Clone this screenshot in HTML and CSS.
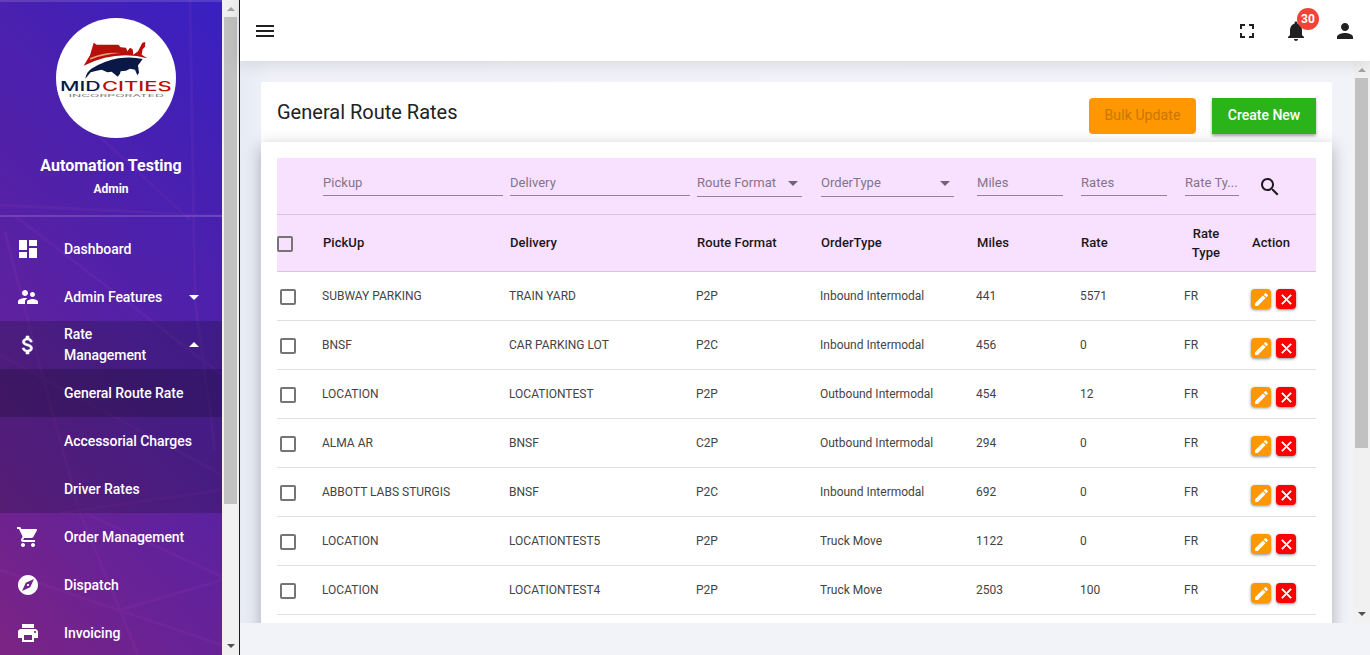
FILE: index.html
```
<!DOCTYPE html>
<html lang="en">
<head>
<meta charset="utf-8">
<title>General Route Rates</title>
<link rel="stylesheet" href="styles.css">
</head>
<body>
<svg class="defs" width="0" height="0">
  <symbol id="edit" viewBox="0 0 24 24"><path d="M3 17.25V21h3.75L17.81 9.94l-3.75-3.75L3 17.25zM20.71 7.04a1 1 0 0 0 0-1.41l-2.34-2.34a1 1 0 0 0-1.41 0l-1.83 1.83 3.75 3.75 1.83-1.83z"/></symbol>
  <symbol id="close" viewBox="0 0 24 24"><path d="M19 6.41 17.59 5 12 10.59 6.41 5 5 6.41 10.59 12 5 17.59 6.41 19 12 13.41 17.59 19 19 17.59 13.41 12z"/></symbol>
</svg>
<div class="app">
  <aside class="sidebar">
    <div class="side-main">
      <svg class="beams" viewBox="0 0 222 655" preserveAspectRatio="none">
        <path d="M0 205 222 216M5 232 45 385 80 513 120 610 138 655M15 216 222 375M0 355 222 475M0 570 222 645M120 610 222 580M60 513 222 490M85 513 222 577M190 0 195 300 215 450M60 100 190 220"/>
      </svg>
      <div class="profile">
        <div class="logo">
          <svg viewBox="18 18 360 360" width="120" height="120">
            <path fill="#b80f0a" d="M101 161 120 130 131 92 140 98 205 98 212 106 228 107 232 118 240 107 248 112 250 128 264 118 277 92 286 90 285 104 278 112 275 128 292 139Q200 113 101 161z"/>
            <path fill="#e5a080" d="M120 138Q165 119 212 123 165 126 120 143z"/>
            <path fill="#0a1845" d="M106 200Q109 180 124 170 165 146 205 139 245 133 278 141L270 152 264 160 267 182 262 190 255 173 240 170 228 176 212 178 210 185 203 194 196 188 185 179 172 181 155 173 140 176 122 181z"/>
            <text class="logo-name navy" x="30" y="237" textLength="122" lengthAdjust="spacingAndGlyphs">MID</text>
            <text class="logo-name red" x="156" y="237" textLength="209" lengthAdjust="spacingAndGlyphs">CITIES</text>
            <text class="logo-sub" x="56" y="255" textLength="286" lengthAdjust="spacingAndGlyphs">INCORPORATED</text>
          </svg>
        </div>
        <div class="user">Automation Testing</div>
        <div class="role">Admin</div>
      </div>
      <nav class="menu">
        <a class="item"><svg viewBox="0 0 24 24"><path d="M3 13h8V3H3v10zm0 8h8v-6H3v6zm10 0h8V11h-8v10zm0-18v6h8V3h-8z"/></svg><span>Dashboard</span></a>
        <a class="item"><svg viewBox="0 0 24 24"><path d="M16.5 12c1.38 0 2.49-1.12 2.49-2.5S17.88 7 16.5 7 14 8.12 14 9.5s1.12 2.5 2.5 2.5zM9 11c1.66 0 2.99-1.34 2.99-3S10.66 5 9 5 6 6.34 6 8s1.34 3 3 3zm7.500 3c-1.830 0-5.500.920-5.500 2.750V19h11v-2.250c0-1.830-3.670-2.750-5.500-2.750zM9 13c-2.330 0-7 1.170-7 3.500V19h7v-2.250c0-.850.330-2.340 2.370-3.470C10.500 13.100 9.660 13 9 13z"/></svg><span>Admin Features</span><i class="caret down"></i></a>
        <div class="group">
          <a class="item"><svg class="bold" viewBox="0 0 24 24"><path d="M11.800 10.900c-2.270-.590-3-1.200-3-2.150 0-1.090 1.010-1.850 2.700-1.850 1.780 0 2.440.850 2.500 2.100h2.210c-.070-1.720-1.120-3.300-3.210-3.810V3h-3v2.160c-1.940.420-3.500 1.680-3.500 3.610 0 2.310 1.910 3.460 4.700 4.130 2.500.600 3 1.480 3 2.410 0 .690-.490 1.790-2.700 1.790-2.060 0-2.870-.920-2.980-2.100h-2.200c.120 2.190 1.760 3.420 3.680 3.830V21h3v-2.150c1.950-.370 3.500-1.500 3.500-3.550 0-2.840-2.430-3.810-4.700-4.400z"/></svg><span>Rate Management</span><i class="caret up"></i></a>
          <a class="item sub active"><span>General Route Rate</span></a>
          <a class="item sub"><span>Accessorial Charges</span></a>
          <a class="item sub"><span>Driver Rates</span></a>
        </div>
        <a class="item"><svg viewBox="0 0 24 24"><path d="M7 18c-1.100 0-1.990.900-1.990 2S5.900 22 7 22s2-.900 2-2-.900-2-2-2zM1 2v2h2l3.600 7.590-1.350 2.450c-.160.280-.250.610-.250.960 0 1.100.900 2 2 2h12v-2H7.420c-.140 0-.250-.110-.250-.250l.030-.120.900-1.630h7.450c.750 0 1.410-.410 1.750-1.030l3.580-6.490c.080-.140.120-.310.120-.480 0-.550-.450-1-1-1H5.210l-.940-2H1zm16 16c-1.100 0-1.990.900-1.990 2s.890 2 1.990 2 2-.900 2-2-.900-2-2-2z"/></svg><span>Order Management</span></a>
        <a class="item"><svg viewBox="0 0 24 24"><path d="M12 10.900c-.610 0-1.100.490-1.100 1.100s.490 1.100 1.100 1.100c.610 0 1.100-.490 1.100-1.100s-.490-1.100-1.100-1.100zM12 2C6.480 2 2 6.480 2 12s4.480 10 10 10 10-4.480 10-10S17.520 2 12 2zm2.190 12.190L6 18l3.810-8.190L18 6l-3.810 8.190z"/></svg><span>Dispatch</span></a>
        <a class="item"><svg viewBox="0 0 24 24"><path d="M19 8H5c-1.660 0-3 1.340-3 3v6h4v4h12v-4h4v-6c0-1.660-1.340-3-3-3zm-3 11H8v-5h8v5zm3-7c-.550 0-1-.450-1-1s.450-1 1-1 1 .450 1 1-.450 1-1 1zm-1-9H6v4h12V3z"/></svg><span>Invoicing</span></a>
      </nav>
    </div>
    <div class="scrollbar"><i class="arrow up"></i><div class="thumb side-thumb"></div><i class="arrow down"></i></div>
  </aside>
  <div class="page">
    <header class="topbar">
      <svg class="burger" viewBox="0 0 24 24"><path d="M3 18h18v-2H3v2zm0-5h18v-2H3v2zm0-7v2h18V6H3z"/></svg>
      <div class="tools">
        <svg viewBox="0 0 24 24"><path d="M7 14H5v5h5v-2H7v-3zm-2-4h2V7h3V5H5v5zm12 7h-3v2h5v-5h-2v3zM14 5v2h3v3h2V5h-5z"/></svg>
        <div class="bell">
          <svg viewBox="0 0 24 24"><path d="M12 22c1.100 0 2-.900 2-2h-4c0 1.100.890 2 2 2zm6-6v-5c0-3.070-1.640-5.640-4.500-6.320V4c0-.830-.670-1.500-1.500-1.500s-1.500.670-1.500 1.500v.680C7.630 5.360 6 7.920 6 11v5l-2 2v1h16v-1l-2-2z"/></svg>
          <span class="badge">30</span>
        </div>
        <svg viewBox="0 0 24 24"><path d="M12 12c2.210 0 4-1.790 4-4s-1.790-4-4-4-4 1.790-4 4 1.790 4 4 4zm0 2c-2.670 0-8 1.340-8 4v2h16v-2c0-2.660-5.330-4-8-4z"/></svg>
      </div>
    </header>
    <div class="scroller">
      <main class="content">
        <section class="card-head">
          <h1>General Route Rates</h1>
          <div class="btn bulk">Bulk Update</div>
          <div class="btn create">Create New</div>
        </section>
        <section class="card-body">
          <div class="table">
            <div class="row filters">
              <span></span>
              <div class="field">Pickup</div>
              <div class="field">Delivery</div>
              <div class="field select route">Route Format<i class="caret down"></i></div>
              <div class="field select order">OrderType<i class="caret down"></i></div>
              <div class="field short">Miles</div>
              <div class="field short">Rates</div>
              <div class="field tiny">Rate Ty...</div>
              <svg class="search" viewBox="0 0 24 24"><path d="M15.500 14h-.790l-.280-.270C15.410 12.590 16 11.110 16 9.500 16 5.910 13.090 3 9.500 3S3 5.910 3 9.500 5.910 16 9.500 16c1.610 0 3.090-.590 4.230-1.570l.270.280v.790l5 4.990L20.490 19l-4.990-5zm-6 0C7.010 14 5 11.990 5 9.500S7.010 5 9.500 5 14 7.010 14 9.500 11.990 14 9.500 14z"/></svg>
            </div>
            <div class="row heads">
              <i class="check"></i><b>PickUp</b><b>Delivery</b><b>Route Format</b><b>OrderType</b><b>Miles</b><b>Rate</b><b class="two-line">Rate Type</b><b>Action</b>
            </div>
            <div class="row"><i class="check"></i><span>SUBWAY PARKING</span><span>TRAIN YARD</span><span>P2P</span><span>Inbound Intermodal</span><span>441</span><span>5571</span><span>FR</span><div class="actions"><a class="edit"><svg><use href="#edit"/></svg></a><a class="del"><svg><use href="#close"/></svg></a></div></div>
            <div class="row"><i class="check"></i><span>BNSF</span><span>CAR PARKING LOT</span><span>P2C</span><span>Inbound Intermodal</span><span>456</span><span>0</span><span>FR</span><div class="actions"><a class="edit"><svg><use href="#edit"/></svg></a><a class="del"><svg><use href="#close"/></svg></a></div></div>
            <div class="row"><i class="check"></i><span>LOCATION</span><span>LOCATIONTEST</span><span>P2P</span><span>Outbound Intermodal</span><span>454</span><span>12</span><span>FR</span><div class="actions"><a class="edit"><svg><use href="#edit"/></svg></a><a class="del"><svg><use href="#close"/></svg></a></div></div>
            <div class="row"><i class="check"></i><span>ALMA AR</span><span>BNSF</span><span>C2P</span><span>Outbound Intermodal</span><span>294</span><span>0</span><span>FR</span><div class="actions"><a class="edit"><svg><use href="#edit"/></svg></a><a class="del"><svg><use href="#close"/></svg></a></div></div>
            <div class="row"><i class="check"></i><span>ABBOTT LABS STURGIS</span><span>BNSF</span><span>P2C</span><span>Inbound Intermodal</span><span>692</span><span>0</span><span>FR</span><div class="actions"><a class="edit"><svg><use href="#edit"/></svg></a><a class="del"><svg><use href="#close"/></svg></a></div></div>
            <div class="row"><i class="check"></i><span>LOCATION</span><span>LOCATIONTEST5</span><span>P2P</span><span>Truck Move</span><span>1122</span><span>0</span><span>FR</span><div class="actions"><a class="edit"><svg><use href="#edit"/></svg></a><a class="del"><svg><use href="#close"/></svg></a></div></div>
            <div class="row"><i class="check"></i><span>LOCATION</span><span>LOCATIONTEST4</span><span>P2P</span><span>Truck Move</span><span>2503</span><span>100</span><span>FR</span><div class="actions"><a class="edit"><svg><use href="#edit"/></svg></a><a class="del"><svg><use href="#close"/></svg></a></div></div>
          </div>
        </section>
      </main>
      <div class="scrollbar"><i class="arrow up"></i><div class="thumb page-thumb"></div><i class="arrow down"></i></div>
    </div>
  </div>
</div>
</body>
</html>
```

FILE: styles.css
```
* { box-sizing: border-box; }
body { margin: 0; font-family: Roboto, "Liberation Sans", sans-serif; color: #212121; background: #f2f3f8; }
.defs { position: absolute; }
.app { display: flex; width: 1370px; height: 655px; overflow: hidden; }

/* Sidebar */
.sidebar { display: flex; flex: none; width: 240px; border-right: 1px solid #1c1a20; }
.side-main { position: relative; flex: none; width: 222px; overflow: hidden; color: #fff;
  background: linear-gradient(48deg, #7c2484 0%, #672296 25%, #5521a6 52%, #4720b1 76%, #3920c3 100%); }
.beams { position: absolute; inset: 0; width: 222px; height: 655px; fill: none; stroke: #c050c8; stroke-opacity: .09; stroke-width: 3; }
.profile { position: relative; height: 217px; padding-top: 16px; border-top: 2px solid rgba(255,255,255,.13); border-bottom: 2px solid rgba(255,255,255,.15); text-align: center; }
.logo { width: 120px; height: 120px; margin-left: 56px; border-radius: 50%; background: #fff; overflow: hidden; }
.logo svg { display: block; }
.logo-name { font: 500 40px Inter, sans-serif; }
.navy { fill: #0a1845; }
.red { fill: #b80f0a; }
.logo-sub { font: 12px Inter, sans-serif; fill: #777; }
.user { margin-top: 18px; font-size: 16px; line-height: 20px; font-weight: 700; }
.role { margin-top: 6px; font-size: 12px; line-height: 14px; font-weight: 700; }
.menu { position: relative; padding-top: 8px; }
.item { display: flex; align-items: center; height: 48px; padding: 0 16px; font-size: 14px; font-weight: 500; line-height: 21px; letter-spacing: -.05px; }
.item svg { flex: none; width: 24px; height: 24px; margin-right: 24px; fill: #fff; }
.item .bold { stroke: #fff; stroke-width: .6px; }
.item span { flex: 1; }
.item .caret { margin-right: 7px; }
.item .caret.up { margin-bottom: 2px; }
.group { background: rgba(20,15,40,.26); }
.group .item:first-child span { padding-right: 30px; }
.sub { padding-left: 64px; padding-right: 0; }
.active { background: rgba(20,10,40,.28); }
.caret { flex: none; width: 0; height: 0; border: 5px solid transparent; }
.caret.down { border-top-color: currentColor; border-bottom: 0; }
.caret.up { border-bottom-color: currentColor; border-top: 0; }

/* Scrollbars */
.scrollbar { display: flex; flex-direction: column; align-items: center; flex: none; width: 17px; background: #f1f1f1; }
.arrow { width: 0; height: 0; border: 4px solid transparent; }
.arrow.up { margin: 7px 0 6px; border-top: 0; border-bottom-color: #a3a3a3; }
.arrow.down { margin: auto 0 7px; border-bottom: 0; border-top-color: #505050; }
.thumb { width: 13px; background: #c1c1c1; }
.side-thumb { height: 487px; }
.page-thumb { height: 370px; }

/* Top bar */
.page { flex: 1; display: flex; flex-direction: column; }
.topbar { position: relative; z-index: 2; display: flex; align-items: center; justify-content: space-between; flex: none; height: 61px; padding: 0 13px; background: #fff; box-shadow: 0 2px 16px rgba(69,65,78,.16); }
.topbar svg { display: block; width: 24px; height: 24px; fill: #212121; }
.tools { display: flex; gap: 25px; }
.bell { position: relative; }
.badge { position: absolute; left: 13px; top: -11px; width: 22px; height: 22px; border-radius: 50%; background: #f44336; color: #fff; font-size: 12px; line-height: 22px; font-weight: 700; text-align: center; }

/* Content */
.scroller { display: flex; flex: none; height: 562px; overflow: hidden; }
.content { flex: 1; min-width: 0; padding: 21px 21px 0; background: linear-gradient(90deg, #e7ebf4, #f0f2f8 3%, #f2f3f8); overflow: hidden; }
.card-head { display: flex; height: 60px; padding: 16px 16px 0; border-radius: 2px 2px 0 0; background: #fff; }
h1 { flex: 1; margin: 0; font-size: 20px; line-height: 28px; font-weight: 400; }
.btn { height: 36px; font-size: 14px; font-weight: 500; line-height: 35px; text-align: center; }
.bulk { width: 107px; margin-right: 16px; border-radius: 4px; background: #ff9800; color: #c67700; font-weight: 400; letter-spacing: .1px; }
.create { width: 104px; background: #2bb31a; color: #fff; box-shadow: 0 2px 3px rgba(0,0,0,.35); }
.card-body { height: 520px; padding: 16px; background: #fff; box-shadow: 0 5px 15px rgba(50,50,75,.38); }
.row { display: grid; grid-template-columns: 45px 187px 187px 124px 156px 104px 104px 67px 1fr; align-items: center; height: 49px; border-bottom: 1px solid #e0e0e0; font-size: 12px; color: #444; }
.row > span { padding-bottom: 1px; }
.row .check { margin: 1px 0 0 3px; }
.filters, .heads { height: 57px; background: #f8e1ff; border-color: #d8c4df; font-size: 13px; }
.heads b { padding: 0 0 2px 1px; font-weight: 500; color: #1b1520; letter-spacing: .05px; line-height: 19px; }
.row.heads .check { margin: 1px 0 0; }
.heads .two-line { width: 43px; padding-bottom: 0; text-align: center; }
.heads b:last-child { padding-left: 1px; }
.check { width: 16px; height: 16px; border: 2px solid #757575; border-radius: 2px; }
.filters { align-items: start; padding-top: 16px; }
.field { display: flex; align-items: center; justify-content: space-between; width: 180px; height: 22px; margin-left: 1px; padding-bottom: 4px; border-bottom: 1px solid #957f9b; color: #83748a; letter-spacing: .04px; white-space: nowrap; }
.select { height: 23px; padding: 0 4px 5px 0; }
.select .caret { color: #6f6476; margin-top: 1px; }
.route { width: 105px; }
.order { width: 133px; }
.short { width: 86px; }
.tiny { width: 54px; }
.search { width: 24px; height: 24px; margin: 1px 0 0 7px; fill: #1f1823; }
.actions { display: flex; gap: 5px; padding-top: 6px; }
.actions a { display: flex; align-items: center; justify-content: center; width: 20px; height: 20px; border-radius: 4px; box-shadow: 0 1px 3px rgba(0,0,0,.45); }
.actions svg { width: 17px; height: 17px; fill: #fff; }
.actions .del svg { stroke: #fff; stroke-width: .8px; }
.edit { background: #ff9800; }
.del { background: #f00; }
```
